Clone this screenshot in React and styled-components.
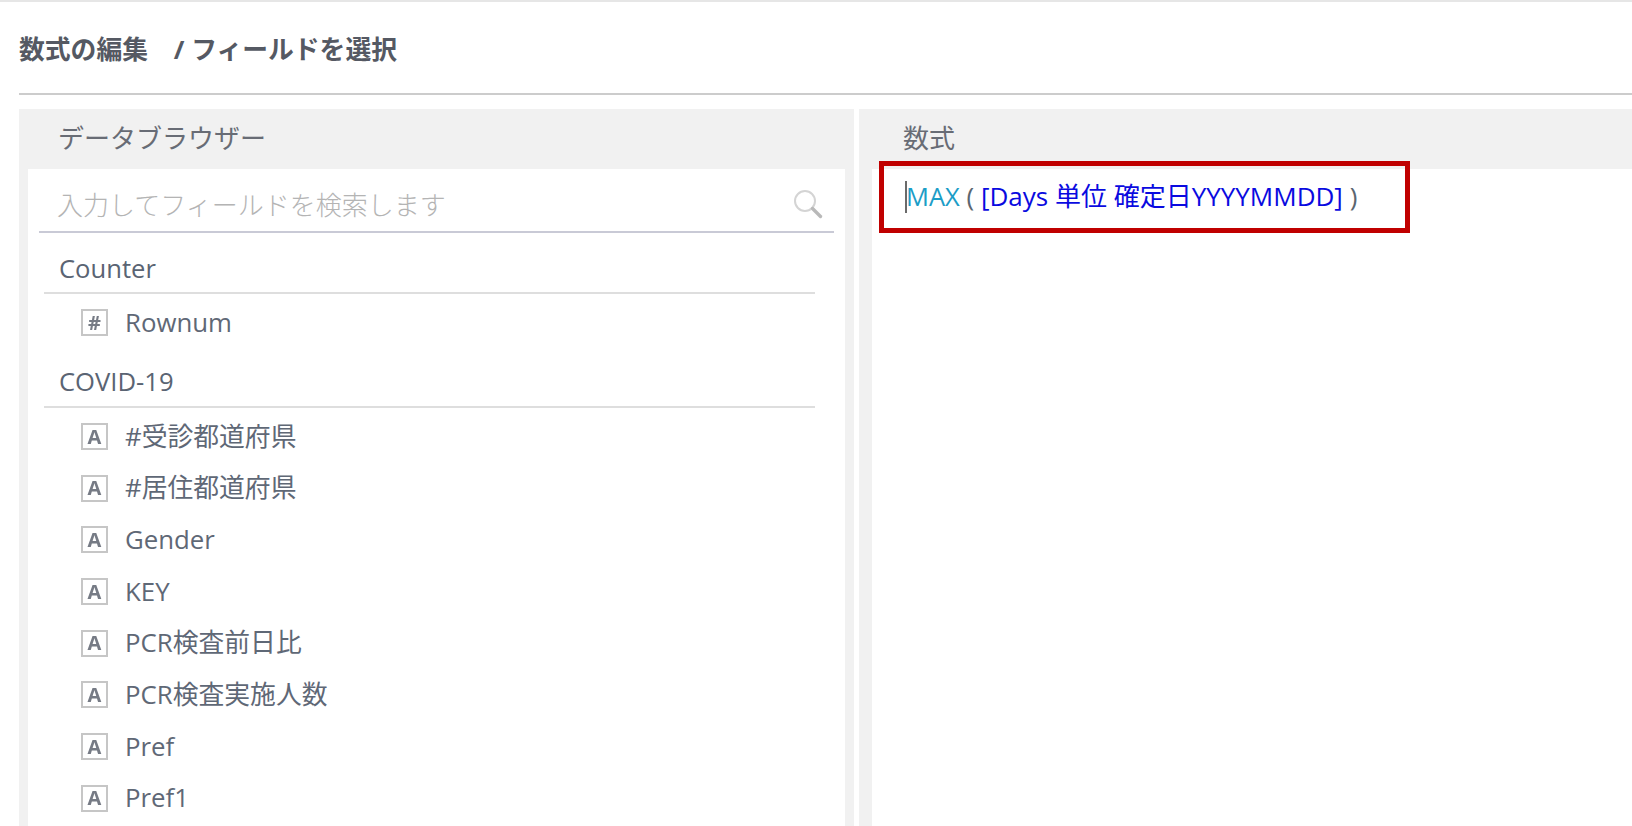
import React from "react";
import styled, { createGlobalStyle } from "styled-components";

const Global = createGlobalStyle`
  html, body { margin: 0; padding: 0; background: #fff; }
  body { font-family: "Open Sans", "Noto Sans CJK JP", sans-serif; }
`;

const Page = styled.div`
  width: 1632px;
  height: 826px;
  overflow: hidden;
  display: flex;
  flex-direction: column;
  border-top: 2px solid #e6e6e6;
  box-sizing: border-box;
  color: #5f6876;
`;

const TitleBar = styled.h1`
  margin: 0 0 14px 19px;
  height: 93px;
  box-sizing: border-box;
  border-bottom: 2px solid #cccccc;
  padding-top: 30px;
  font-size: 25.8px;
  line-height: 34px;
  font-weight: 700;
  color: #555963;
  white-space: pre;
`;

const Panels = styled.div`
  flex: 1;
  display: flex;
  gap: 5px;
  margin-left: 19px;
  min-height: 0;
`;

const Panel = styled.section`
  background: #f1f1f1;
  display: flex;
  flex-direction: column;
  width: ${(p) => p.$width};
  flex: ${(p) => (p.$grow ? 1 : "none")};
  min-width: 0;
`;

const PanelHeader = styled.div`
  height: 60px;
  box-sizing: border-box;
  padding-left: ${(p) => p.$indent};
  padding-top: 11px;
  font-size: 26px;
  line-height: 36px;
  color: #686c75;
`;

const PanelBody = styled.div`
  flex: 1;
  background: #fff;
  margin: ${(p) => p.$margin};
  position: relative;
  min-height: 0;
`;

const SearchRow = styled.div`
  height: 64px;
  box-sizing: border-box;
  margin: 0 11px;
  border-bottom: 2px solid #c9cad6;
  display: flex;
  align-items: center;
  justify-content: space-between;
  padding: 8px 10px 0 18px;
`;

const Placeholder = styled.span`
  font-size: 26px;
  line-height: 36px;
  font-weight: 300;
  color: #b4b4b4;
  margin-top: 2px;
`;

const SectionHead = styled.div`
  height: ${(p) => (p.$first ? "61px" : "59px")};
  box-sizing: border-box;
  margin: 0 30px 0 16px;
  padding: ${(p) => (p.$first ? "18px" : "15px")} 0 0 15px;
  border-bottom: 2px solid #dedede;
  font-size: 25.6px;
  line-height: 36px;
  color: #5a6473;
`;

const FieldList = styled.ul`
  list-style: none;
  margin: 0;
  padding: 3px 0 0;
`;

const FieldRow = styled.li`
  height: 51.7px;
  display: flex;
  align-items: center;
  gap: 17px;
  padding-left: 53px;
  font-size: 25.8px;
  line-height: 36px;
  color: #5f6876;
  white-space: nowrap;
`;

const FieldName = styled.span`
  margin-bottom: 2px;
`;

const TypeIcon = styled.span`
  width: 27px;
  height: 27px;
  box-sizing: border-box;
  border: 2px solid #c6c6c6;
  display: flex;
  align-items: center;
  justify-content: center;
  flex: none;
`;

const TypeGlyph = styled.span`
  font-size: 20px;
  font-weight: 700;
  line-height: 1;
  color: #767b85;
  filter: blur(0.5px);
`;

const Formula = styled.div`
  padding: 9px 0 0 33px;
  font-size: 26px;
  line-height: 36px;
  white-space: pre;
  position: relative;
`;

const Caret = styled.span`
  display: inline-block;
  width: 2px;
  height: 32px;
  background: #6a6a6a;
  vertical-align: -7px;
  margin-right: -1px;
`;

const Fn = styled.span`color: #1c9dc7; font-size: 25.5px;`;
const Paren = styled.span`color: #5b6670;`;
const FieldRef = styled.span`color: #0a0ae0;`;

const Highlight = styled.div`
  position: absolute;
  left: 7px;
  top: -8px;
  width: 531px;
  height: 72px;
  box-sizing: border-box;
  border: 5px solid #c00000;
  pointer-events: none;
`;

const SearchIcon = () => (
  <svg width="32" height="32" viewBox="0 0 32 32" fill="none">
    <circle cx="13" cy="13" r="10" stroke="#d4d4d4" strokeWidth="2" />
    <path d="M20.5 20.5l8 8" stroke="#b9b9b9" strokeWidth="3.4" strokeLinecap="round" />
  </svg>
);

const counter = ["Rownum"];
const covid = [
  "#受診都道府県",
  "#居住都道府県",
  "Gender",
  "KEY",
  "PCR検査前日比",
  "PCR検査実施人数",
  "Pref",
  "Pref1",
];

export default function App() {
  return (
    <Page>
      <Global />
      <TitleBar>{"数式の編集　/ フィールドを選択"}</TitleBar>
      <Panels>
        <Panel $width="835px">
          <PanelHeader $indent="39px">データブラウザー</PanelHeader>
          <PanelBody $margin="0 9px">
            <SearchRow>
              <Placeholder>入力してフィールドを検索します</Placeholder>
              <SearchIcon />
            </SearchRow>
            <SectionHead $first>Counter</SectionHead>
            <FieldList>
              {counter.map((f) => (
                <FieldRow key={f}>
                  <TypeIcon><TypeGlyph>#</TypeGlyph></TypeIcon>
                  <FieldName>{f}</FieldName>
                </FieldRow>
              ))}
            </FieldList>
            <SectionHead>COVID-19</SectionHead>
            <FieldList>
              {covid.map((f) => (
                <FieldRow key={f}>
                  <TypeIcon><TypeGlyph>A</TypeGlyph></TypeIcon>
                  <FieldName>{f}</FieldName>
                </FieldRow>
              ))}
            </FieldList>
          </PanelBody>
        </Panel>
        <Panel $grow>
          <PanelHeader $indent="44px">数式</PanelHeader>
          <PanelBody $margin="0 0 0 13px">
            <Formula>
              <Caret />
              <Fn>MAX</Fn>
              <Paren> ( </Paren>
              <FieldRef>[Days 単位 確定日YYYYMMDD]</FieldRef>
              <Paren> )</Paren>
            </Formula>
            <Highlight />
          </PanelBody>
        </Panel>
      </Panels>
    </Page>
  );
}
